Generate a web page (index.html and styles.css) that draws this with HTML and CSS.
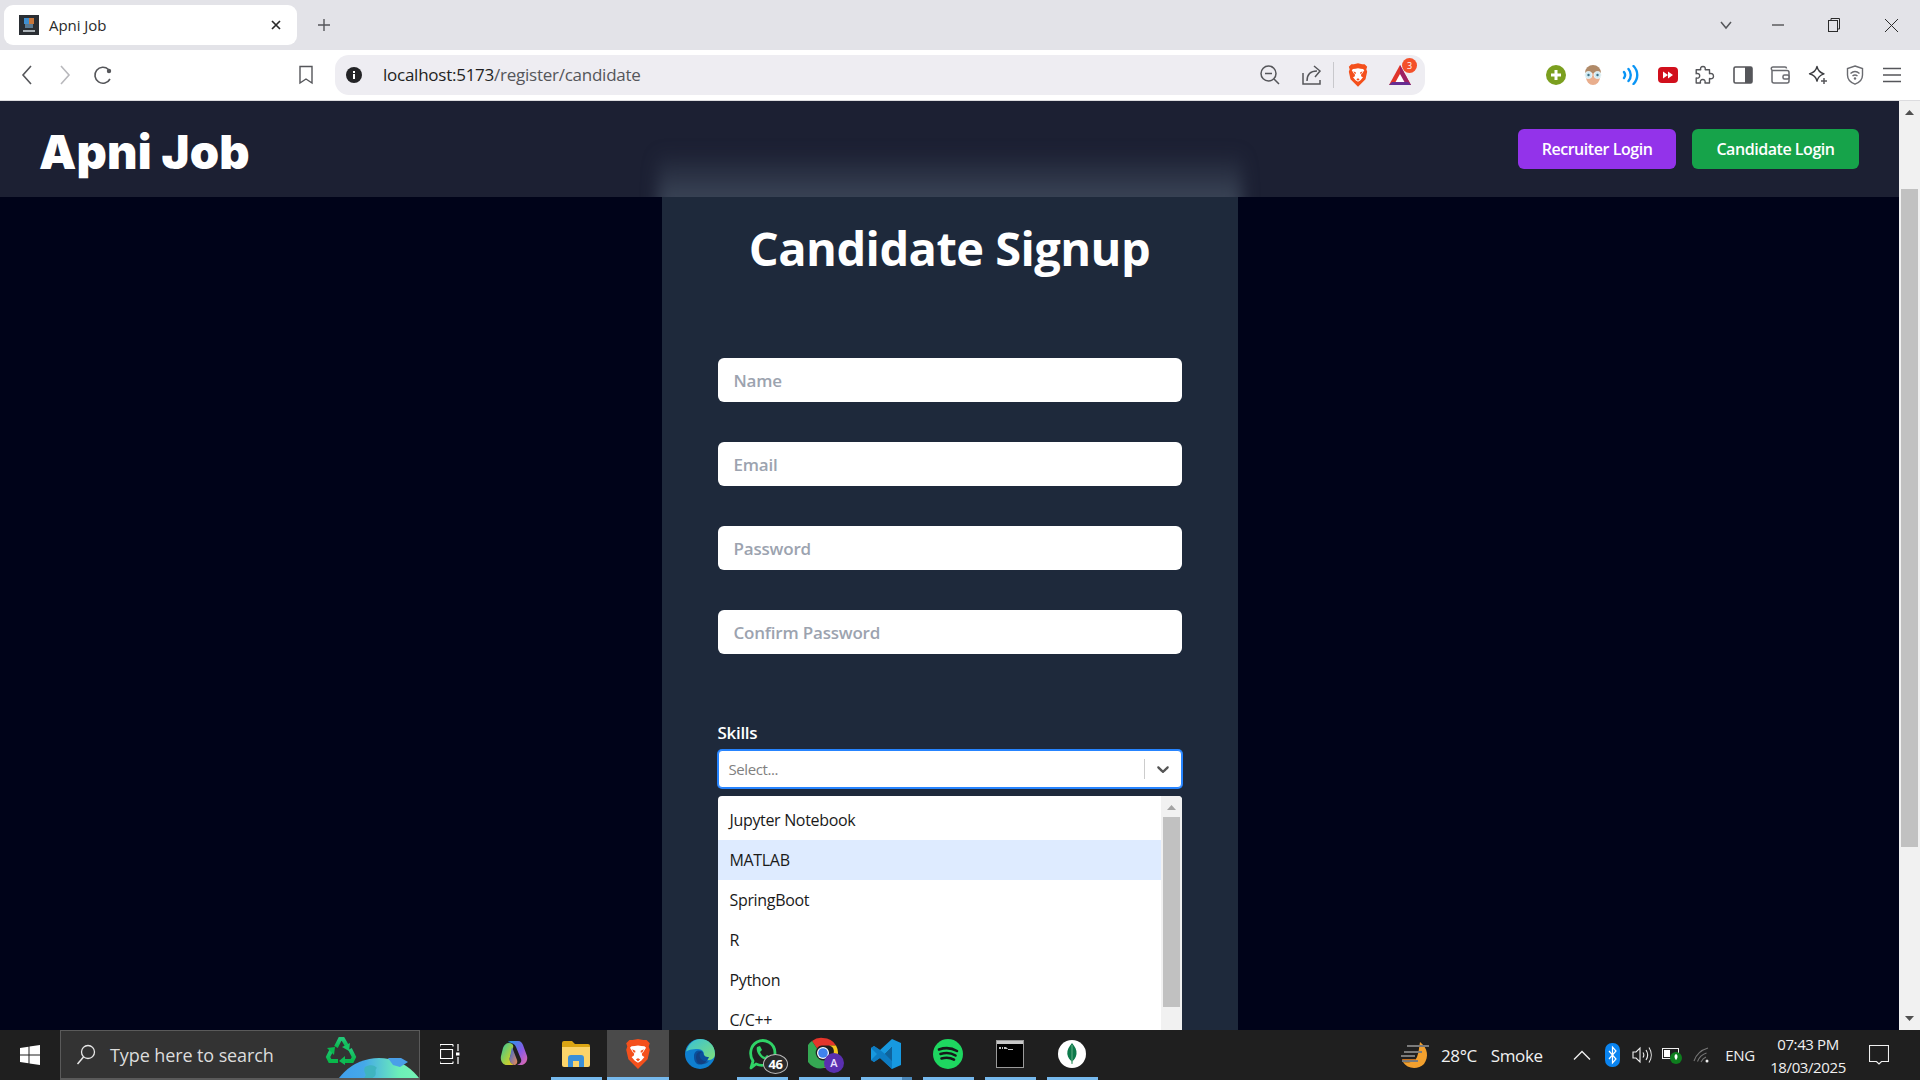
FILE: index.html
```html
<!DOCTYPE html>
<html lang="en">
<head>
<meta charset="utf-8">
<title>Apni Job</title>
<link rel="stylesheet" href="styles.css">
</head>
<body>
<svg class="defs" width="0" height="0" aria-hidden="true">
  <defs>
    <symbol id="brave" viewBox="0 0 24 28">
      <path fill="#f4501c" d="M12 0l5 1 3 0 3 3-1 3 1 3-2 9-6 6-3 3-3-3-6-6-2-9 1-3-1-3 3-3 3 0z"/>
      <path fill="#fff" d="M12 6l3 .5 3 .2 1.500 1.500-2.500 4-1.500 1.500.5 2 2 1-3 3.500-3 2-3-2-3-3.500 2-1 .5-2-1.500-1.500-2.500-4 1.500-1.500 3-.2z"/>
      <path fill="#f4501c" d="M6.500 9.500l3 1.500 0 1.500-1.500 0zM17.500 9.500l-3 1.500 0 1.500 1.500 0zM10 19l2-1 2 1-2 2z"/>
    </symbol>
    <linearGradient id="edgeG" x1="0" y1="0" x2="1" y2="1"><stop offset="0" stop-color="#37c0d8"/><stop offset="1" stop-color="#7fe07a"/></linearGradient>
    <linearGradient id="copG" x1="0" y1="0" x2="1" y2="1"><stop offset="0" stop-color="#1a9ee8"/><stop offset=".55" stop-color="#8a5ae6"/><stop offset="1" stop-color="#e86aa8"/></linearGradient>
    <linearGradient id="copH" x1="0" y1="0" x2="1" y2="1"><stop offset="0" stop-color="#2fc4a0"/><stop offset=".6" stop-color="#a8d040"/><stop offset="1" stop-color="#f4c020"/></linearGradient>
    <linearGradient id="copM" x1="0" y1="0" x2="1" y2="1"><stop offset="0" stop-color="#2a6ae0"/><stop offset="1" stop-color="#f08a50"/></linearGradient>
    <linearGradient id="recG" x1="0" y1="0" x2="0" y2="1"><stop offset="0" stop-color="#22c878"/><stop offset="1" stop-color="#08b84a"/></linearGradient>
    <linearGradient id="globeG" x1="0" y1="0" x2="1" y2="0"><stop offset="0" stop-color="#3d9cf0"/><stop offset=".35" stop-color="#45a8e8"/><stop offset=".7" stop-color="#6ceeb8"/><stop offset="1" stop-color="#7af7b4"/></linearGradient>
  </defs>
</svg>

<div class="screen">
  <header class="tabstrip">
    <div class="tab">
      <svg class="favicon" viewBox="0 0 20 20"><rect width="20" height="20" fill="#2a2e33"/><rect x="5" y="3" width="5" height="6" fill="#3f8fd0"/><rect x="10" y="3" width="5" height="6" fill="#c8763a"/><rect x="6" y="9" width="8" height="4" fill="#5b7a92"/><rect x="4" y="15" width="12" height="2" fill="#aab2b8"/></svg>
      <span class="tab-title">Apni Job</span>
      <svg class="tab-close" viewBox="0 0 12 12"><path d="M2 2l8 8M10 2l-8 8" stroke="#2b2b2b" stroke-width="1.700" fill="none"/></svg>
    </div>
    <svg class="new-tab" viewBox="0 0 14 14"><path d="M7 1v12M1 7h12" stroke="#55565a" stroke-width="1.400" fill="none"/></svg>
    <div class="win-group">
      <span class="tab-list"><svg width="14" height="14" viewBox="0 0 14 14"><path d="M2 4l5 6 5-6" stroke="#55565a" stroke-width="1.500" fill="none"/></svg></span>
      <span class="win-btn"><svg width="14" height="14" viewBox="0 0 14 14"><path d="M1 7h12" stroke="#2b2b2b" stroke-width="1.100"/></svg></span>
      <span class="win-btn win-restore"><svg width="14" height="16" viewBox="0 0 14 16"><rect x="1.500" y="3.500" width="9" height="11" fill="none" stroke="#2b2b2b"/><path d="M4 3.500V1.500h8.500v10.500h-2" fill="none" stroke="#2b2b2b"/></svg></span>
      <span class="win-btn"><svg width="15" height="15" viewBox="0 0 15 15"><path d="M1 1l13 13M14 1L1 14" stroke="#2b2b2b" fill="none"/></svg></span>
    </div>
  </header>

  <div class="toolbar">
    <span class="tool-btn"><svg width="20" height="22" viewBox="0 0 20 22"><path d="M14 2L6 11l8 9" stroke="#55565a" stroke-width="1.600" fill="none"/></svg></span>
    <span class="tool-btn"><svg width="20" height="22" viewBox="0 0 20 22"><path d="M6 2l8 9-8 9" stroke="#b8b8bc" stroke-width="1.600" fill="none"/></svg></span>
    <span class="tool-btn"><svg width="20" height="20" viewBox="0 0 20 20"><path d="M15.500 4.500A8 8 0 1 0 17 14" stroke="#55565a" stroke-width="1.600" fill="none"/><circle cx="16" cy="6" r="2.200" fill="#55565a"/></svg></span>
    <span class="tool-btn bookmark"><svg width="16" height="20" viewBox="0 0 16 20"><path d="M2 1.500h12V18l-6-4-6 4z" stroke="#55565a" stroke-width="1.400" fill="none"/></svg></span>
    <div class="address">
      <svg class="info" viewBox="0 0 16 16"><circle cx="8" cy="8" r="8" fill="#232326"/><rect x="7" y="7" width="2" height="5" fill="#fff"/><rect x="7" y="4" width="2" height="2" fill="#fff"/></svg>
      <span class="url"><span class="url-host">localhost:5173</span>/register/candidate</span>
      <svg class="addr-zoom" width="22" height="22" viewBox="0 0 22 22"><circle cx="9.500" cy="9.500" r="7.500" stroke="#55565a" stroke-width="1.500" fill="none"/><path d="M6 9.500h7M15 15l5 5" stroke="#55565a" stroke-width="1.500" fill="none"/></svg>
      <svg class="addr-share" width="22" height="22" viewBox="0 0 22 22"><path d="M2 9v11h17v-4" stroke="#55565a" stroke-width="1.500" fill="none"/><path d="M6 17c0-7 4-10 10-10M13 2l6 5-5 6" stroke="#55565a" stroke-width="1.500" fill="none"/></svg>
      <span class="addr-div"></span>
      <svg class="addr-brave" width="20" height="24"><use href="#brave"/></svg>
      <span class="bat">
        <svg width="24" height="24" viewBox="0 0 24 24"><path d="M12 2L1 22h22z" fill="#e0352b"/><path d="M12 2l11 20H12z" fill="#9e1f63"/><path d="M12 11l5 9H7z" fill="#fff"/><path d="M1 22l3-3h16l3 3z" fill="#662d91"/></svg>
        <span class="bat-badge">3</span>
      </span>
    </div>
    <div class="ext-group">
      <span class="ext"><svg width="20" height="20" viewBox="0 0 20 20"><circle cx="10" cy="10" r="10" fill="#7b9f1f"/><path d="M10 5v10M5 10h10" stroke="#fff" stroke-width="3"/></svg></span>
      <span class="ext"><svg width="20" height="20" viewBox="0 0 20 20"><circle cx="10" cy="8" r="8" fill="#b08a68"/><ellipse cx="10" cy="12" rx="7" ry="8" fill="#e9ae8d"/><path d="M3 8c3 0 10 0 14 0l-1-4H5z" fill="#b08a68"/><circle cx="5.500" cy="10" r="3.500" fill="#cfe9f2" stroke="#e8f4f6"/><circle cx="14.500" cy="10" r="3.500" fill="#cfe9f2" stroke="#e8f4f6"/><circle cx="5.500" cy="10" r="1.200" fill="#3b6f84"/><circle cx="14.500" cy="10" r="1.200" fill="#3b6f84"/></svg></span>
      <span class="ext"><svg width="18" height="20" viewBox="0 0 18 20"><path d="M2 7c1.500 2 1.500 4 0 6M6.500 4c3 3.500 3 8.500 0 12M11.500 1c5 5 5 13 0 18" stroke="#0a95f5" stroke-width="2.400" fill="none" stroke-linecap="round"/></svg></span>
      <span class="ext"><svg width="20" height="16" viewBox="0 0 20 16"><rect width="20" height="16" rx="4" fill="#d10f1c"/><path d="M5 4.500l5 3.500-5 3.500zM10 4.500l5 3.500-5 3.500z" fill="#fff"/></svg></span>
      <span class="ext"><svg width="20" height="20" viewBox="0 0 20 20"><path d="M8 1.500c2 0 2.500 1.500 2.200 3.200h4.300v4c2.500-.8 4 .5 4 2.500s-1.500 3-4 2.300v4.500H10c.6-2.400-.6-3.500-2.200-3.500s-3 1.100-2.300 3.500H1.200v-5c2.300.5 3.500-.5 3.500-2.200S3.500 8 1.200 8.700V4.700h4.500C5.200 3 6 1.500 8 1.500z" stroke="#55565a" stroke-width="1.400" fill="none" stroke-linejoin="round"/></svg></span>
      <span class="ext"><svg width="20" height="18" viewBox="0 0 20 18"><rect x="1" y="1" width="18" height="16" rx="1.500" stroke="#55565a" stroke-width="1.600" fill="none"/><rect x="12" y="1" width="7" height="16" fill="#55565a"/></svg></span>
      <span class="ext"><svg width="20" height="18" viewBox="0 0 20 18"><path d="M2 4.500V15a2 2 0 0 0 2 2h13a2 2 0 0 0 2-2V6.500a2 2 0 0 0-2-2H3a1.500 1.500 0 0 1 0-3.500h12c1 0 1.500.6 1.500 1.500" stroke="#6a6b70" stroke-width="1.500" fill="none"/><rect x="13" y="9" width="6" height="4" rx="1.500" stroke="#6a6b70" stroke-width="1.500" fill="#fff"/></svg></span>
      <span class="ext"><svg width="20" height="20" viewBox="0 0 20 20"><path d="M9 1.500c.8 4 2.500 6 7 7.300-4.500 1.300-6.200 3.400-7 7.400C8.200 12.200 6 10 1.500 8.800 6 7.500 8.200 5.500 9 1.500z" stroke="#3b3c40" stroke-width="1.400" fill="none" stroke-linejoin="round"/><path d="M16 13v6M13 16h6" stroke="#55565a" stroke-width="1.500"/></svg></span>
      <span class="ext"><svg width="18" height="20" viewBox="0 0 18 20"><path d="M9 1l7.500 2.500V10c0 4.500-3 7.500-7.500 9.200C4.500 17.500 1.500 14.500 1.500 10V3.500z" stroke="#6a6b70" stroke-width="1.400" fill="none"/><path d="M4.500 8.500c2.800-2.500 6.200-2.500 9 0M6.500 11c1.600-1.300 3.400-1.300 5 0" stroke="#6a6b70" stroke-width="1.400" fill="none"/><circle cx="9" cy="13.500" r="1.200" fill="#6a6b70"/></svg></span>
      <span class="ext"><svg width="20" height="16" viewBox="0 0 20 16"><path d="M1 1.500h18M1 8h18M1 14.500h18" stroke="#55565a" stroke-width="1.500"/></svg></span>
    </div>
  </div>

  <div class="viewport">
    <main class="page">
      <nav class="navbar">
        <span class="nav-glow"></span>
        <a class="brand">Apni Job</a>
        <div class="nav-actions">
          <button class="btn btn-purple">Recruiter Login</button>
          <button class="btn btn-green">Candidate Login</button>
        </div>
      </nav>
      <section class="card">
        <h1 class="card-title">Candidate Signup</h1>
        <form class="fields">
          <input class="field" placeholder="Name">
          <input class="field" placeholder="Email">
          <input class="field" placeholder="Password">
          <input class="field" placeholder="Confirm Password">
        </form>
        <label class="skills-label">Skills</label>
        <div class="select">
          <span class="select-ph">Select...</span>
          <span class="select-sep"></span>
          <svg class="select-chev" viewBox="0 0 20 20"><path fill="#555" d="M4.516 7.548c0.436-0.446 1.043-0.481 1.576 0l3.908 3.747 3.908-3.747c0.533-0.481 1.141-0.446 1.574 0 0.436 0.445 0.408 1.197 0 1.615-0.406 0.418-4.695 4.502-4.695 4.502-0.217 0.223-0.502 0.335-0.787 0.335s-0.57-0.112-0.789-0.335c0 0-4.287-4.084-4.695-4.502s-0.436-1.17 0-1.615z"/></svg>
        </div>
        <div class="menu">
          <ul class="options">
            <li class="option">Jupyter Notebook</li>
            <li class="option option-active">MATLAB</li>
            <li class="option">SpringBoot</li>
            <li class="option">R</li>
            <li class="option">Python</li>
            <li class="option">C/C++</li>
          </ul>
          <div class="menu-scroll">
            <svg class="menu-arrow" width="9" height="5" viewBox="0 0 9 5"><path d="M4.500 0L9 5H0z" fill="#a3a3a3"/></svg>
            <span class="menu-thumb"></span>
          </div>
        </div>
      </section>
    </main>
    <aside class="scrollbar">
      <svg class="sb-up" width="9" height="5" viewBox="0 0 9 5"><path d="M4.500 0L9 5H0z" fill="#505050"/></svg>
      <span class="sb-thumb"></span>
      <svg class="sb-down" width="9" height="5" viewBox="0 0 9 5"><path d="M0 0h9L4.500 5z" fill="#505050"/></svg>
    </aside>
  </div>

  <footer class="taskbar">
    <span class="start"><svg width="20" height="20" viewBox="0 0 20 20"><path fill="#fff" d="M0 3l8.500-1.200V9.500H0zM9.500 1.600L20 0v9.500H9.500zM0 10.500h8.500v7.700L0 17zM9.500 10.500H20V20L9.500 18.400z"/></svg></span>
    <div class="search">
      <svg class="search-ico" width="20" height="22" viewBox="0 0 20 22"><circle cx="12" cy="8" r="6.500" stroke="#e8e8e8" stroke-width="1.300" fill="none"/><path d="M7.500 13L1.500 20" stroke="#e8e8e8" stroke-width="1.500"/></svg>
      <span class="search-text">Type here to search</span>
      <svg class="recycle" width="32" height="32" viewBox="0 0 32 32"><g fill="none" stroke="url(#recG)" stroke-width="4"><path d="M11 13l4-8h3l4 7"/><path d="M25 15l4 8-2 4h-8"/><path d="M13 27H5l-2-4 4-8"/></g><path d="M25 9l-1 8-7-4z" fill="#16c463"/><path d="M20 22v9l-6-4z" fill="#0fbb55"/><path d="M2 14l8-1-1 8z" fill="#0bb84f"/></svg>
      <svg class="globe" width="84" height="22" viewBox="0 0 84 22"><circle cx="41" cy="50" r="50" fill="url(#globeG)"/><path d="M27 9c5-3 10-2 12 1-3 2 0 5-2 8-2 2-5 3-5 4h-8c2-2 5-4 3-7-1-2-1-4 0-6z" fill="#3fb4c0"/><path d="M50 0h13l7 4-8 5-7-2z" fill="#4a9fe8"/></svg>
    </div>
    <span class="task task-first"><svg width="20" height="20" viewBox="0 0 20 20"><g stroke="#fff" fill="none" stroke-width="1.200"><path d="M0 .5h13M0 19.500h13M.5 5.500h12v9H.5zM0 .5v2M13 .5v2M0 19.500v-2M13 19.500v-2"/><path d="M18 0v7M18 13v7"/></g><rect x="16" y="8.500" width="3.500" height="3" fill="#fff"/></svg></span>
    <span class="task"><svg width="28" height="25" viewBox="0 0 28 25"><path d="M9 2c3 0 5 2 4 5l-3 9c-1 3 0 6 4 8H7c-4 0-7-4-6-9L3 7c1-3 3-5 6-5z" fill="url(#copH)"/><path d="M12 6l5 13c1 3-1 5-3 5-4-2-5-5-4-8z" fill="url(#copM)"/><path d="M8 1c1-1 2-1 4-1h6c3 0 4 2 5 4l4 11c1 4-1 8-5 9h-5c3-1 5-3 4-6L16 6c-1-3-4-4-8-5z" fill="url(#copG)"/></svg></span>
    <span class="task task-on"><svg width="28" height="26" viewBox="0 0 28 26"><path d="M0 2a2 2 0 0 1 2-2h8l3 3h13a2 2 0 0 1 2 2v3H0z" fill="#dba513"/><path d="M0 6h28v18a2 2 0 0 1-2 2H2a2 2 0 0 1-2-2z" fill="#fbd46a"/><path d="M6 26v-9a3 3 0 0 1 3-3h10a3 3 0 0 1 3 3v9h-5v-6h-6v6z" fill="#3a8fd8"/></svg></span>
    <span class="task task-on task-active"><svg width="26" height="30"><use href="#brave"/></svg></span>
    <span class="task"><svg width="30" height="30" viewBox="0 0 30 30"><circle cx="15" cy="15" r="15" fill="#0f7fd0"/><path d="M1 13C3 5 9 0 15 0c8 0 15 6 15 15 0 4-3 6-7 6-3 0-5-2-5-4 2-3 0-7-5-7-6 0-11 1-12 3z" fill="url(#edgeG)"/><path d="M9 17c0-5 5-7 9-4 1 4 2 5 6 5-3 8-10 9-13 6-2-2-2-5-2-7z" fill="#0a4f9c"/><path d="M11 18c0-4 3-6 6-5-3 1-3 4-1 7 2 2 5 3 8 2-3 4-8 4-11 2-1-1-2-4-2-6z" fill="#1a2f66" opacity=".5"/></svg></span>
    <span class="task task-on">
      <svg width="30" height="32" viewBox="0 0 30 32"><path d="M4 30l2-7C2 17 3 8 10 4c8-4 18 1 18 11 0 9-10 15-19 11z" stroke="#2fd366" stroke-width="2.800" fill="none" stroke-linejoin="round"/><path d="M10 9l3-1 2 4-2 2c1 2 2 4 5 5l2-2 4 2-1 3c-6 2-15-6-13-13z" fill="#2fd366"/></svg>
      <span class="wa-badge">46</span>
    </span>
    <span class="task task-on">
      <svg width="32" height="36" viewBox="0 0 32 36"><path d="M15 2a15 15 0 0 1 13 7.500H15a6 6 0 0 0-6 3L4 5A15 15 0 0 1 15 2z" fill="#e5352b"/><path d="M28 9.500A15 15 0 0 1 16 32l6-11a6 6 0 0 0-1-11.500z" fill="#f8c71c"/><path d="M4 5a15 15 0 0 0 12 27l6-11a6.500 6.500 0 0 1-13-8.500z" fill="#35a853"/><circle cx="15" cy="17" r="6" fill="#fff"/><circle cx="15" cy="17" r="4.800" fill="#3f82ee"/></svg>
      <span class="ch-badge">A</span>
    </span>
    <span class="task task-on task-split"><svg width="30" height="30" viewBox="0 0 30 30"><path d="M21 0l9 4v22l-9 4-12-11-6 4-3-2v-12l3-2 6 4zM21 8l-7 7 7 7z" fill="#1799e0"/><path d="M21 0v8l-7 7-5-4-6-4-3 2 6 6-6 6 3 2 6-4 12 11z" fill="#0b74bc" opacity=".8"/></svg></span>
    <span class="task task-on"><svg width="30" height="30" viewBox="0 0 30 30"><circle cx="15" cy="15" r="15" fill="#1ed760"/><path d="M6 10.500c6-2 13-1.500 18 1.500M7.500 15c5-1.500 11-1 15 1.500M8.500 19.500c4.500-1.200 9-.8 12.500 1.200" stroke="#16181a" stroke-width="2.600" fill="none" stroke-linecap="round"/></svg></span>
    <span class="task task-on"><svg width="28" height="28" viewBox="0 0 28 28"><rect x=".5" y=".5" width="27" height="27" fill="#000" stroke="#9a9a9a"/><rect x="1" y="1" width="26" height="3" fill="#c8c8c8"/><path d="M3 7h2v2H3zM6 7h1v2H6zM8 7h2l2 2H8zM12 9h5v1h-5z" fill="#c0c0c0"/></svg></span>
    <span class="task task-on"><svg width="28" height="28" viewBox="0 0 28 28"><circle cx="14" cy="14" r="14" fill="#fff"/><path d="M14 3c3 3.500 5 7 4.500 11-.5 3.500-2.500 6-3.800 7l-.3 3h-.8l-.3-3c-1.300-1-3.500-3.500-4-7C9 10 11 6.500 14 3z" fill="#0d7a4b"/><path d="M14 5v19" stroke="#9fd3b0" stroke-width=".6"/></svg></span>

    <div class="tray">
      <span class="weather"><svg width="30" height="30" viewBox="0 0 30 30"><path d="M19 2c8 6 9 15 4 22-6 6-17 5-21-2 7 1 12 0 14-5 2-5 2-10 3-15z" fill="#f2a02e"/><path d="M1 19h14l-1 3H2z" fill="#c66f1c"/><path d="M6 6h22M3 12h18M0 16h14M1 21h16" stroke="#7a7a7a" stroke-width="2"/></svg></span>
      <span class="weather-text"><span>28°C</span><span>Smoke</span></span>
      <span class="tray-slot"><svg width="18" height="10" viewBox="0 0 18 10"><path d="M1 9.500L9 1.500l8 8" stroke="#f0f0f0" stroke-width="1.300" fill="none"/></svg></span>
      <span class="tray-slot"><svg width="15" height="24" viewBox="0 0 15 24"><rect width="15" height="24" rx="7" fill="#0a84f0"/><path d="M4 8l7 8-3.500 4V4L11 8l-7 8" stroke="#fff" stroke-width="1.200" fill="none"/></svg></span>
      <span class="tray-slot"><svg width="20" height="18" viewBox="0 0 20 18"><path d="M1 6h3l4-4v14l-4-4H1z" stroke="#eee" stroke-width="1.100" fill="none"/><path d="M11 6.500c1 1.500 1 3.500 0 5M14 4c2 3 2 7 0 10M17 1.500c3 4.500 3 10.500 0 15" stroke="#eee" stroke-width="1.100" fill="none"/></svg></span>
      <span class="tray-slot"><svg width="20" height="18" viewBox="0 0 20 18"><rect x=".5" y="2.500" width="16" height="10" fill="none" stroke="#eee"/><rect x="2" y="4" width="6" height="7" fill="#fff"/><circle cx="14" cy="12" r="6" fill="#0e7d1e"/><path d="M14 8c2 1 2 4 0 6-2-2-2-5 0-6z" fill="#fff"/></svg></span>
      <span class="tray-slot"><svg width="18" height="16" viewBox="0 0 18 16"><g stroke="#777" fill="none" stroke-width="1.100"><path d="M1 14C3 8 8 3 15 1"/><path d="M4.500 14.500c1.500-4 4.500-7 9-8.500"/><path d="M8 15c1-2 2.500-4 5-5"/></g><circle cx="14" cy="14" r="1.500" fill="#eee"/></svg></span>
      <span class="tray-lang">ENG</span>
      <span class="clock"><span>07:43 PM</span><span>18/03/2025</span></span>
      <span class="notif"><svg width="20" height="20" viewBox="0 0 20 20"><path d="M.5.500h19v16h-7l-2.500 2.500L7.500 16.500h-7z" stroke="#f0f0f0" stroke-width="1.100" fill="none"/></svg></span>
    </div>
  </footer>
</div>
</body>
</html>
```

FILE: styles.css
```css
* { box-sizing: border-box; }
html, body { margin: 0; padding: 0; height: 100%; overflow: hidden; }
body { font-family: "Open Sans", "Noto Sans", sans-serif; background: #000319; }
.defs { display: block; height: 0; }
.screen { display: flex; flex-direction: column; width: 1920px; height: 1080px; overflow: hidden; }

/* Tab strip */
.tabstrip { display: flex; align-items: center; height: 50px; flex: none; padding-left: 4px; background: #e3e3e8; }
.tab { display: flex; align-items: center; width: 293px; height: 40px; padding: 0 15px; background: #fff; border-radius: 9px; }
.favicon { width: 20px; height: 20px; flex: none; }
.tab-title { margin-left: 10px; font-size: 15px; letter-spacing: -.05px; color: #2b2b2b; }
.tab-close { width: 12px; height: 12px; margin-left: auto; margin-right: 0; }
.new-tab { width: 14px; height: 14px; margin-left: 20px; }
.win-group { display: flex; align-items: center; margin-left: auto; }
.tab-list { display: flex; justify-content: center; width: 40px; margin-right: 3px; }
.win-btn { display: flex; justify-content: center; align-items: center; width: 57px; height: 30px; }
.win-restore { padding-right: 2px; }

/* Toolbar */
.toolbar { display: flex; align-items: center; flex: none; height: 51px; padding: 0 9px 1px 8px; background: #fff; border-bottom: 1px solid #dcdcdf; }
.tool-btn { display: flex; justify-content: center; align-items: center; width: 38px; height: 38px; }
.bookmark { margin-left: 165px; }
.address { display: flex; align-items: center; width: 1090px; height: 40px; margin-left: 10px; padding-left: 11px; background: #eeedf2; border-radius: 14px; }
.info { width: 16px; height: 16px; flex: none; }
.url { margin-left: 21px; font-size: 17px; letter-spacing: -.25px; color: #55565a; }
.url-host { color: #1f1f22; }
.addr-zoom { margin-left: auto; }
.addr-share { margin-left: 20px; }
.addr-div { width: 1px; height: 26px; margin-left: 10px; background: #c8c8cc; }
.addr-brave { margin-left: 14px; }
.bat { position: relative; display: block; width: 24px; height: 24px; margin-left: 20px; margin-right: 13px; }
.bat-badge { position: absolute; top: -5px; left: 14px; width: 15px; height: 15px; border-radius: 50%; background: #f4502a; color: #fff; font-size: 9px; line-height: 15px; text-align: center; }
.ext-group { display: flex; margin-left: auto; }
.ext { display: flex; justify-content: center; align-items: center; width: 37.400px; height: 38px; }

/* Viewport */
.viewport { display: flex; flex: 1; min-height: 0; }
.page { flex: 1; min-width: 0; overflow: hidden; background: #000319; }
.navbar { position: relative; display: flex; align-items: center; justify-content: space-between; height: 96px; padding: 0 39px 0 39px; background: #1c2033; overflow: hidden; }
.nav-glow { position: absolute; left: 50%; top: 50px; width: 584px; height: 70px; margin-left: -292px; background: linear-gradient(to bottom, rgba(58, 68, 86, 0), #3a4456 68%); filter: blur(8px); }
.brand { position: relative; top: 3px; font-family: Inter, "Open Sans", sans-serif; font-size: 47px; font-weight: 900; line-height: 48px; letter-spacing: .2px; color: #fff; }
.nav-actions { position: relative; left: -1px; display: flex; gap: 16px; }
.btn { height: 40px; padding: 0 24px; border: 0; border-radius: 6px; font-family: inherit; font-size: 16px; font-weight: 600; letter-spacing: -.45px; color: #fff; }
.btn-purple { width: 158px; padding: 0; background: #9333ea; }
.btn-green { width: 167px; padding: 0; background: #16a34a; }

/* Card */
.card { display: flex; flex-direction: column; width: 576px; height: 900px; margin: 0 auto; padding: 27px 56px 0; background: #1e293b; }
.card-title { margin: 0 0 86px; font-size: 47px; font-weight: 700; line-height: 48px; letter-spacing: -.55px; color: #fff; text-align: center; }
.fields { display: flex; flex-direction: column; gap: 40px; }
.field { width: 100%; height: 44px; padding: 0 16px; border: 0; border-radius: 6px; background: #fff; font-family: inherit; font-size: 17px; font-weight: 600; letter-spacing: -.2px; }
.field::placeholder { color: #9ca3af; opacity: 1; }
.skills-label { margin-top: 67px; margin-bottom: 1px; font-size: 17px; font-weight: 600; line-height: 24px; letter-spacing: -.3px; color: #fff; }
.select { display: flex; align-items: center; height: 38px; margin-top: 4px; padding-left: 10px; background: #fff; border: 1px solid #2684ff; border-radius: 4px; box-shadow: 0 0 0 1px #2684ff; }
.select-ph { font-size: 15px; letter-spacing: -.4px; color: #808080; }
.select-sep { width: 1px; height: 20px; margin-left: auto; background: #ccc; }
.select-chev { width: 20px; height: 20px; margin: 0 8px; }
.menu { display: flex; height: 260px; margin-top: 8px; background: #fff; border-radius: 4px 4px 0 0; overflow: hidden; }
.options { flex: 1; margin: 0; padding: 4px 0 0; list-style: none; }
.option { height: 40px; padding: 0 12px; font-size: 16px; line-height: 40px; letter-spacing: -.33px; color: #1a1a1a; }
.option-active { background: #deebff; }
.menu-scroll { display: flex; flex-direction: column; align-items: center; width: 21px; background: #f1f1f1; padding-top: 9px; }
.menu-thumb { width: 17px; height: 190px; margin-top: 7px; background: #c1c1c1; }

/* Page scrollbar */
.scrollbar { display: flex; flex-direction: column; align-items: center; width: 21px; flex: none; background: #f1f1f1; padding-top: 9px; }
.sb-thumb { width: 17px; height: 658px; margin-top: 74px; background: #c1c1c1; }
.sb-down { margin-top: auto; margin-bottom: 9px; }

/* Taskbar */
.taskbar { display: flex; align-items: stretch; flex: none; height: 50px; background: #1f1f1f; }
.start { display: flex; align-items: center; justify-content: center; width: 60px; }
.search { position: relative; display: flex; align-items: center; width: 360px; padding-left: 15px; background: #333; border: 1px solid #5a5a5a; border-bottom-width: 2px; overflow: hidden; }
.search-text { margin-left: 14px; font-size: 18px; letter-spacing: -.1px; color: #dcdcdc; }
.recycle { position: absolute; left: 264px; top: 3px; }
.globe { position: absolute; left: 277px; bottom: -2px; }
.task { position: relative; display: flex; align-items: center; justify-content: center; width: 62px; padding-bottom: 3px; }
.task-first { width: 63px; padding-right: 4px; }
.task-on::after { content: ""; position: absolute; left: 6px; right: 5px; bottom: 0; height: 3px; background: #76b9ed; }
.task-active { background: #4a4a4a; }
.task-active::after { left: 0; right: 0; }
.task-split::after { background: linear-gradient(90deg, #76b9ed 80%, #4b87b8 80%); }
.wa-badge { position: absolute; left: 32px; top: 24px; width: 25px; height: 20px; border: 1px solid #bbb; border-radius: 50%; background: #2b2b2b; color: #fff; font-size: 13px; font-weight: 700; line-height: 18px; text-align: center; letter-spacing: -.5px; }
.ch-badge { position: absolute; left: 31px; top: 23px; width: 20px; height: 20px; border-radius: 50%; background: #5a2fb0; color: #e8e0ff; font-size: 11px; font-weight: 600; line-height: 20px; text-align: center; }
.tray { display: flex; align-items: center; margin-left: auto; padding-right: 15px; color: #f0f0f0; }
.weather { display: flex; justify-content: center; width: 32px; }
.weather-text { display: flex; gap: 14px; width: 126px; margin-left: 9px; font-size: 17px; letter-spacing: -.4px; }
.tray-slot { display: flex; justify-content: center; align-items: center; width: 30px; }
.tray-lang { width: 46px; font-size: 15px; letter-spacing: -.4px; text-align: center; }
.clock { display: flex; flex-direction: column; gap: 3px; width: 90px; font-size: 15px; line-height: 20px; letter-spacing: -.4px; text-align: center; }
.notif { display: flex; justify-content: center; width: 52px; }
```
